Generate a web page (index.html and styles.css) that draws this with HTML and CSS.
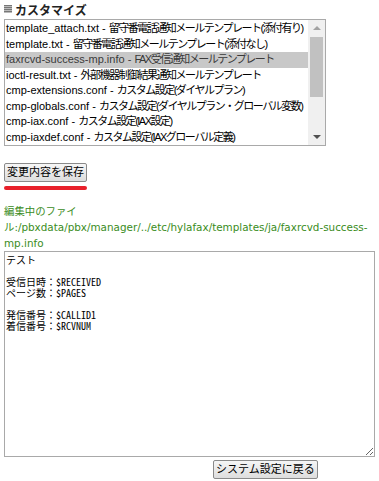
FILE: index.html
```html
<!DOCTYPE html>
<html>
<head>
    <meta charset="utf-8">
    <title>カスタマイズ</title>
    <link rel="stylesheet" href="styles.css">
</head>
<body>
    <h2 class="section-title"><span class="title-icon"></span>カスタマイズ</h2>

    <div class="listbox">
        <ul class="file-list">
            <li>template_attach.txt - <span class="desc">留守番電話通知メールテンプレート(添付有り)</span></li>
            <li>template.txt - <span class="desc">留守番電話通知メールテンプレート(添付なし)</span></li>
            <li class="selected">faxrcvd-success-mp.info - <span class="desc">FAX受信通知メールテンプレート</span></li>
            <li>ioctl-result.txt - <span class="desc">外部機器制御結果通知メールテンプレート</span></li>
            <li>cmp-extensions.conf - <span class="desc">カスタム設定(ダイヤルプラン)</span></li>
            <li>cmp-globals.conf - <span class="desc">カスタム設定(ダイヤルプラン・グローバル変数)</span></li>
            <li>cmp-iax.conf - <span class="desc">カスタム設定(IAX設定)</span></li>
            <li>cmp-iaxdef.conf - <span class="desc">カスタム設定(IAXグローバル定義)</span></li>
        </ul>
        <div class="scrollbar">
            <span class="arrow arrow-up"></span>
            <div class="track"><div class="thumb"></div></div>
            <span class="arrow arrow-down"></span>
        </div>
    </div>

    <div class="save-row">
        <button type="button" class="btn">変更内容を保存</button>
        <div class="underline"></div>
    </div>

    <p class="editing">編集中のファイル:/pbxdata/pbx/manager/../etc/hylafax/templates/ja/faxrcvd-success-mp.info</p>

    <textarea class="editor">テスト

受信日時：$RECEIVED
ページ数：$PAGES

発信番号：$CALLID1
着信番号：$RCVNUM</textarea>

    <div class="back-row">
        <button type="button" class="btn">システム設定に戻る</button>
    </div>
</body>
</html>
```

FILE: styles.css
```css
body {
    margin: 0;
    padding: 2px 4px 0 4px;
    font-family: 'Liberation Sans', 'Noto Sans CJK JP', sans-serif;
    background-color: #fff;
    color: #000;
}

.section-title {
    display: flex;
    align-items: center;
    margin: 0;
    height: 14px;
    font-size: 12px;
    font-weight: bold;
    color: #222;
}

.title-icon {
    width: 8px;
    height: 8px;
    margin-right: 3px;
    background: repeating-linear-gradient(#777 0 1px, #bbb 1px 2px);
}

.listbox {
    display: flex;
    margin-top: 3px;
    width: 322px;
    height: 127px;
    border: 1px solid #a9a9a9;
    box-sizing: border-box;
    overflow: hidden;
}

.file-list {
    flex: 1;
    list-style: none;
    margin: 0;
    padding: 1px 0 0 0;
    overflow: hidden;
}

.file-list li {
    height: 15.5px;
    line-height: 15.5px;
    padding-left: 1px;
    font-size: 11px;
    white-space: nowrap;
    overflow: hidden;
    color: #000;
}

.file-list .desc {
    letter-spacing: -1.5px;
}

.file-list li.selected {
    background-color: #c8c8c8;
    color: #3a3a3a;
}

.scrollbar {
    width: 17px;
    display: flex;
    flex-direction: column;
    align-items: center;
    background-color: #f0f0f0;
}

.arrow {
    width: 0;
    height: 0;
    border-left: 4px solid transparent;
    border-right: 4px solid transparent;
    margin: 6px 0;
}

.arrow-up {
    border-bottom: 4px solid #a3a3a3;
}

.arrow-down {
    border-top: 4px solid #505050;
}

.track {
    flex: 1;
    width: 100%;
}

.thumb {
    margin: 1px 2px 0 2px;
    height: 60px;
    background-color: #c1c1c1;
}

.save-row {
    display: inline-flex;
    flex-direction: column;
    margin-top: 17px;
}

.btn {
    font-family: 'Liberation Sans', 'Noto Sans CJK JP', sans-serif;
    font-size: 11px;
    height: 19px;
    padding: 0 2px;
    line-height: 15px;
    white-space: nowrap;
    color: #000;
    background: linear-gradient(#f6f6f6, #dddddd);
    border: 1px solid #8a8a8a;
    border-radius: 2px;
}

.underline {
    margin-top: 4px;
    height: 4px;
    border-radius: 2px;
    background-color: #e8202a;
}

.editing {
    margin: 13px 0 0 0;
    font-family: 'DejaVu Sans', 'Noto Sans CJK JP', sans-serif;
    font-size: 10.4px;
    line-height: 16px;
    color: #3a8c1c;
    width: 371px;
}

.editor {
    display: block;
    width: 371px;
    height: 206px;
    margin: 0;
    padding: 2px 1px;
    box-sizing: border-box;
    border: 1px solid #a9a9a9;
    font-family: 'Noto Sans Mono CJK JP', 'DejaVu Sans Mono', monospace;
    font-size: 10px;
    line-height: 11px;
    color: #000;
    resize: both;
}

.back-row {
    margin-top: 2px;
    padding-left: 209px;
}
```
